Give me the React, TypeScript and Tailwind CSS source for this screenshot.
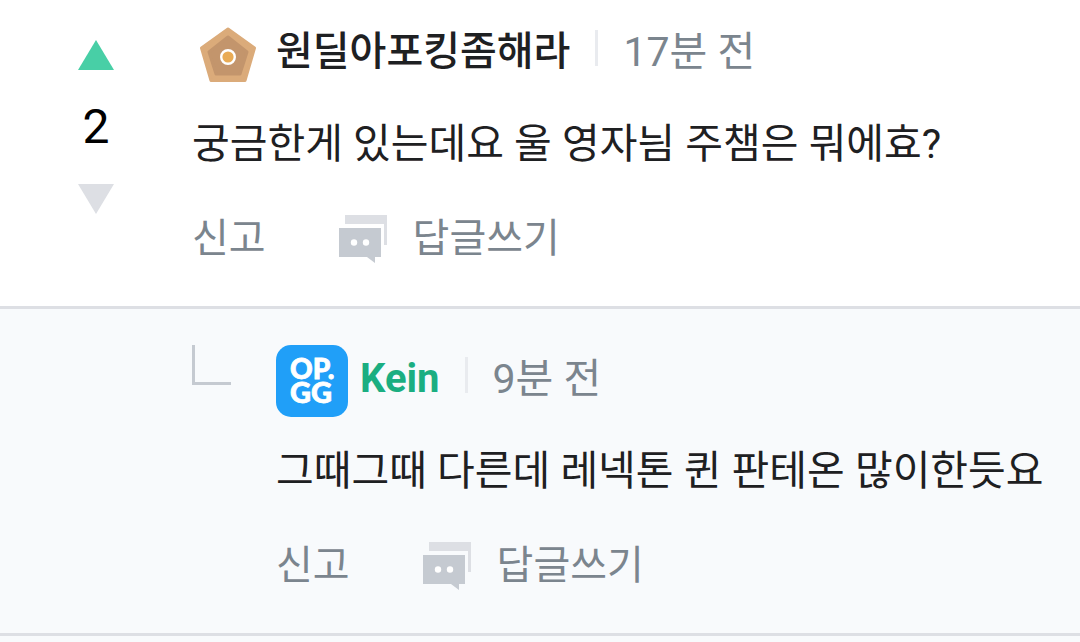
import { ReactNode } from 'react';
import { clsx } from 'clsx';

type CommentProps = {
  icon: ReactNode;
  name: string;
  time: string;
  text: string;
  staff?: boolean;
};

function TierIcon() {
  return (
    <svg viewBox="0 0 72 72" className="size-[72px] shrink-0" aria-hidden="true">
      <path
        d="M36 11L62.5 30L53 62.5H19L9.5 30Z"
        fill="#dbab7a"
        stroke="#dbab7a"
        strokeWidth="3"
        strokeLinejoin="round"
      />
      <path
        d="M36 19L55 34L48 56H24L17 34Z"
        fill="#c3956c"
        stroke="#c3956c"
        strokeWidth="3"
        strokeLinejoin="round"
      />
      <circle cx="36" cy="39" r="6.8" fill="#e9ab55" stroke="#fff" strokeWidth="2.4" />
    </svg>
  );
}

function StaffLogo() {
  return (
    <svg viewBox="0 0 72 72" className="size-[72px] shrink-0" role="img" aria-label="OP.GG">
      <rect width="72" height="72" rx="15" fill="#209ff8" />
      <g fill="#fff" stroke="#fff" strokeWidth="0.8" fontFamily="Lato, sans-serif" fontWeight="900">
        <text x="14" y="34" fontSize="28">OP.</text>
        <text x="14" y="58" fontSize="29">GG</text>
      </g>
    </svg>
  );
}

function ReplyIcon() {
  return (
    <svg viewBox="0 0 48 48" className="size-12 shrink-0" aria-hidden="true">
      <path d="M6 0H48V30H45V9H6Z" fill="#dddfe4" />
      <path d="M0 13H42V42H36V48L28 42H0Z" fill="#c5cad1" />
      <circle cx="15" cy="27.5" r="3.2" fill="#fff" />
      <circle cx="27" cy="27.5" r="3.2" fill="#fff" />
    </svg>
  );
}

function Votes({ count }: { count: number }) {
  return (
    <div className="flex w-48 shrink-0 flex-col items-center pt-5">
      <button aria-label="추천" className="py-5">
        <svg viewBox="0 0 36 30" className="h-[30px] w-9">
          <path d="M18 0L36 30H0Z" fill="#48cfa6" />
        </svg>
      </button>
      <span className="my-1 text-[48px] leading-[66px] text-black">{count}</span>
      <button aria-label="비추천" className="py-5">
        <svg viewBox="0 0 36 30" className="h-[30px] w-9">
          <path d="M0 0H36L18 30Z" fill="#dddfe4" />
        </svg>
      </button>
    </div>
  );
}

function Comment({ icon, name, time, text, staff }: CommentProps) {
  return (
    <div className="min-w-0 flex-1">
      <div className="flex h-[72px] gap-3">
        {icon}
        <div className="flex h-[68px] items-center gap-[25px]">
          <a href="#profile" className={clsx(staff ? 'font-bold text-[#1bae81]' : 'font-medium')}>
            {name}
          </a>
          <span className="mb-2 h-9 w-[3px] bg-[#e9ebef]" />
          <span className="text-[41px] text-[#7b858e]">{time}</span>
        </div>
      </div>
      <p className="mt-6 text-[41px]">{text}</p>
      <div className="mt-[35px] flex items-center text-[#7b858e]">
        <button className="mr-[73px]">신고</button>
        <button className="flex items-center gap-[26px]">
          <ReplyIcon />
          답글쓰기
        </button>
      </div>
    </div>
  );
}

export default function App() {
  return (
    <main
      lang="ko"
      className="min-h-screen bg-[#f8fafc] font-[Roboto,'Noto_Sans_CJK_KR',sans-serif] text-[40px] leading-[60px] whitespace-nowrap text-[#1e2022]"
    >
      <article className="flex border-b-[3px] border-[#dddfe4] bg-white pb-[37px]">
        <Votes count={2} />
        <div className="flex flex-1 pt-[18px]">
          <Comment
            icon={<TierIcon />}
            name="원딜아포킹좀해라"
            time="17분 전"
            text="궁금한게 있는데요 울 영자늼 주챔은 뭐에효?"
          />
        </div>
      </article>
      <article className="flex border-b-[3px] border-[#dddfe4] pt-9 pb-[37px] pl-48">
        <div className="w-[84px] shrink-0">
          <div className="h-10 w-[39px] border-b-[3px] border-l-[3px] border-[#c5cad1]" />
        </div>
        <Comment
          icon={<StaffLogo />}
          name="Kein"
          time="9분 전"
          text="그때그때 다른데 레넥톤 퀸 판테온 많이한듯요"
          staff
        />
      </article>
    </main>
  );
}
